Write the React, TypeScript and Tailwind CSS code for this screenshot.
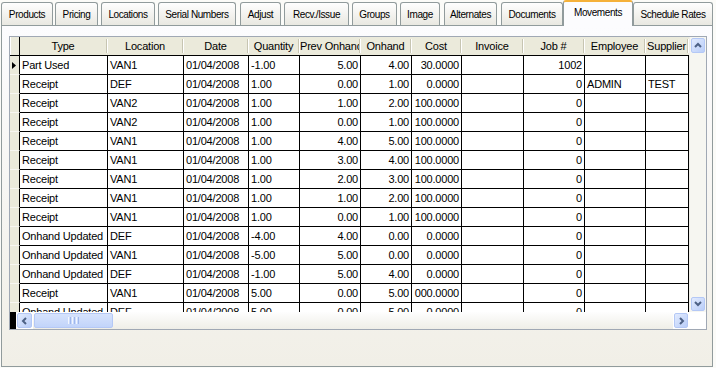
import React from "react";

const tabs = [
  { label: "Products", cls: "ml-[1px] w-[52px]" },
  { label: "Pricing", cls: "ml-[2px] w-[43px]" },
  { label: "Locations", cls: "ml-[3px] w-[54px]" },
  { label: "Serial Numbers", cls: "ml-[3px] w-[78px]" },
  { label: "Adjust", cls: "ml-[4px] w-[41px]" },
  { label: "Recv./Issue", cls: "ml-[3px] w-[65px]" },
  { label: "Groups", cls: "ml-[3px] w-[45px]" },
  { label: "Image", cls: "ml-[3px] w-[40px]" },
  { label: "Alternates", cls: "ml-[4px] w-[53px]" },
  { label: "Documents", cls: "ml-[4px] w-[62px]" },
  { label: "Movements", cls: "w-[70px]", active: true },
  { label: "Schedule Rates", cls: "w-[80px]" },
];

const cols = [
  { label: "Type", w: "w-[88px]", a: "text-left" },
  { label: "Location", w: "w-[76px]", a: "text-left" },
  { label: "Date", w: "w-[65px]", a: "text-left" },
  { label: "Quantity", w: "w-[51px]", a: "text-left" },
  { label: "Prev Onhand", w: "w-[61px]", a: "text-right" },
  { label: "Onhand", w: "w-[51px]", a: "text-right" },
  { label: "Cost", w: "w-[50px]", a: "text-right" },
  { label: "Invoice", w: "w-[62px]", a: "text-left" },
  { label: "Job #", w: "w-[61px]", a: "text-right" },
  { label: "Employee", w: "w-[61px]", a: "text-left" },
  { label: "Supplier", w: "w-[43px]", a: "text-left" },
];

const D = "01/04/2008";
const rows: string[][] = [
  ["Part Used", "VAN1", D, "-1.00", "5.00", "4.00", "30.0000", "", "1002", "", ""],
  ["Receipt", "DEF", D, "1.00", "0.00", "1.00", "0.0000", "", "0", "ADMIN", "TEST"],
  ["Receipt", "VAN2", D, "1.00", "1.00", "2.00", "100.0000", "", "0", "", ""],
  ["Receipt", "VAN2", D, "1.00", "0.00", "1.00", "100.0000", "", "0", "", ""],
  ["Receipt", "VAN1", D, "1.00", "4.00", "5.00", "100.0000", "", "0", "", ""],
  ["Receipt", "VAN1", D, "1.00", "3.00", "4.00", "100.0000", "", "0", "", ""],
  ["Receipt", "VAN1", D, "1.00", "2.00", "3.00", "100.0000", "", "0", "", ""],
  ["Receipt", "VAN1", D, "1.00", "1.00", "2.00", "100.0000", "", "0", "", ""],
  ["Receipt", "VAN1", D, "1.00", "0.00", "1.00", "100.0000", "", "0", "", ""],
  ["Onhand Updated", "DEF", D, "-4.00", "4.00", "0.00", "0.0000", "", "0", "", ""],
  ["Onhand Updated", "VAN1", D, "-5.00", "5.00", "0.00", "0.0000", "", "0", "", ""],
  ["Onhand Updated", "DEF", D, "-1.00", "5.00", "4.00", "0.0000", "", "0", "", ""],
  ["Receipt", "VAN1", D, "5.00", "0.00", "5.00", "000.0000", "", "0", "", ""],
  ["Onhand Updated", "DEF", D, "5.00", "0.00", "5.00", "0.0000", "", "0", "", ""],
];

function Chevron({ dir }: { dir: "up" | "down" | "left" | "right" }) {
  const pts =
    dir === "up"
      ? "1,5 4,2 7,5"
      : dir === "down"
      ? "1,2 4,5 7,2"
      : dir === "left"
      ? "5,1 2,4 5,7"
      : "3,1 6,4 3,7";
  return (
    <svg width="8" height="8" viewBox="0 0 8 8">
      <polyline points={pts} fill="none" stroke="#4d6185" strokeWidth="2" />
    </svg>
  );
}

function ScrollBtn({ dir, cls }: { dir: "up" | "down" | "left" | "right"; cls: string }) {
  return (
    <div className={`${cls} shrink-0 p-px`}>
      <div className="w-full h-full rounded-[2px] border border-[#b4c8f6] bg-linear-to-br from-[#e2ebfe] to-[#b9cdf8] flex items-center justify-center">
        <Chevron dir={dir} />
      </div>
    </div>
  );
}

export default function App() {
  return (
    <div className="w-[716px] h-[368px] bg-[#fbfbf8] overflow-hidden font-['Liberation_Sans',Arial,sans-serif] text-black">
      {/* Tabs */}
      <div className="flex items-end h-[25px]">
        {tabs.map((t) =>
          t.active ? (
            <div
              key={t.label}
              className={`${t.cls} relative z-10 h-[26px] -mb-px shrink-0 flex items-center justify-center pb-[3px] border-x border-[#919b9c] border-t-2 border-t-[#f5b13a] rounded-t-[3px] bg-[#fcfcfe] text-[10px] tracking-[-0.4px] whitespace-nowrap`}
            >
              {t.label}
            </div>
          ) : (
            <div
              key={t.label}
              className={`${t.cls} h-[23px] shrink-0 flex items-center justify-center border border-b-0 border-[#919b9c] rounded-t-[3px] bg-linear-to-b from-[#fefefe] to-[#e9e8e1] text-[10px] tracking-[-0.4px] whitespace-nowrap`}
            >
              {t.label}
            </div>
          )
        )}
      </div>

      {/* Panel */}
      <div className="ml-[1px] w-[712px] h-[342px] border border-[#919b9c] bg-linear-to-b from-[#fcfcfe] to-[#f1efe7] pt-[10px] pl-[7px]">
        <div className="w-[698px] h-[294px] border border-[#a0a8b4] flex flex-col bg-white">
          <div className="flex h-[275px]">
            {/* table */}
            <div className="w-[679px] h-full overflow-hidden text-[11px] tracking-[-0.2px]">
              <div className="flex w-max h-[19px] border-b border-black bg-[#ebeadb]">
                <div className="w-[10px] shrink-0 border-l border-l-white border-r border-r-black" />
                {cols.map((c) => (
                  <div key={c.label} className={`${c.w} shrink-0 flex items-center h-full`}>
                    <span className="flex-1 text-center whitespace-nowrap overflow-hidden leading-[18px]">
                      {c.label}
                    </span>
                    <span className="w-[2px] h-[14px] border-l border-[#c7c5b2] bg-white shrink-0" />
                  </div>
                ))}
              </div>
              {rows.map((r, i) => (
                <div key={i} className="flex w-max h-[19px]">
                  <div className="w-[10px] shrink-0 bg-[#ebeadb] border-r border-r-black border-b border-b-[#f8f7f2] flex items-center justify-end pr-[3px]">
                    {i === 0 && (
                      <svg width="4" height="7" viewBox="0 0 4 7">
                        <polygon points="0,0 4,3.5 0,7" fill="#000" />
                      </svg>
                    )}
                  </div>
                  {cols.map((c, j) => (
                    <div
                      key={j}
                      className={`${c.w} ${c.a} shrink-0 border-r border-b border-black bg-white px-[2px] leading-[18px] whitespace-nowrap overflow-hidden`}
                    >
                      {r[j]}
                    </div>
                  ))}
                </div>
              ))}
            </div>
            {/* vertical scrollbar */}
            <div className="w-[17px] h-full flex flex-col bg-[#f6f6f1] border-l border-[#efeee8]">
              <ScrollBtn dir="up" cls="h-[17px] w-full" />
              <div className="flex-1" />
              <ScrollBtn dir="down" cls="h-[16px] w-full" />
            </div>
          </div>
          {/* horizontal scrollbar */}
          <div className="flex h-[17px]">
            <div className="w-[6px] h-full bg-black shrink-0" />
            <ScrollBtn dir="left" cls="w-[17px] h-full" />
            <div className="flex-1 h-full bg-linear-to-b from-[#fefefe] to-[#efeee7] flex items-stretch py-px">
              <div className="ml-px w-[79px] rounded-[2px] border border-[#b4c8f6] bg-linear-to-b from-[#d6e3fd] to-[#c2d4fa] flex items-center justify-center gap-px">
                <span className="w-px h-[7px] bg-[#f2f6fe]" />
                <span className="w-px h-[7px] bg-[#9fb7ec]" />
                <span className="w-px h-[7px] bg-[#f2f6fe]" />
                <span className="w-px h-[7px] bg-[#9fb7ec]" />
                <span className="w-px h-[7px] bg-[#f2f6fe]" />
                <span className="w-px h-[7px] bg-[#9fb7ec]" />
              </div>
            </div>
            <ScrollBtn dir="right" cls="w-[16px] h-full" />
            <div className="w-[17px] h-full bg-white shrink-0" />
          </div>
        </div>
      </div>
    </div>
  );
}
